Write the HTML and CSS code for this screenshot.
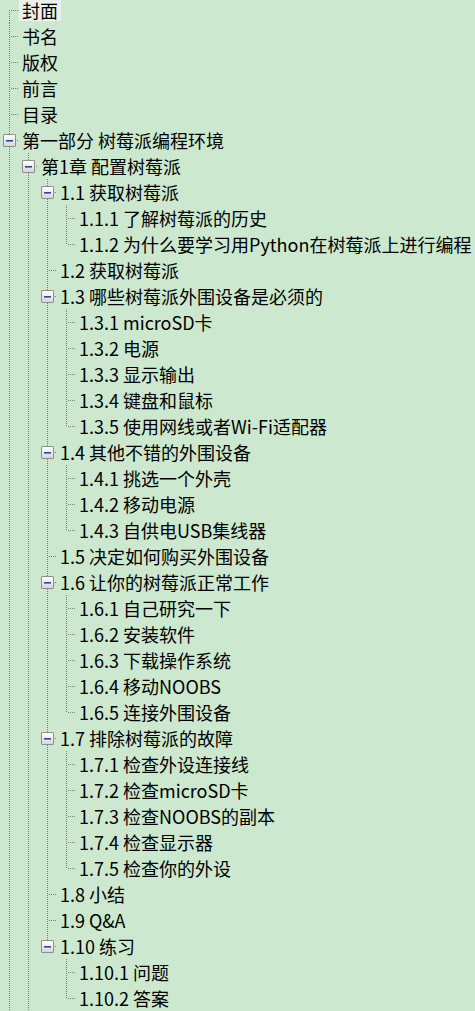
FILE: index.html
```html
<!DOCTYPE html>
<html lang="zh-CN">
<head>
<meta charset="utf-8">
<title>目录</title>
<link rel="stylesheet" href="styles.css">
</head>
<body>
<div class="tree">
  <div class="row"><span class="g f"></span><span class="label sel">封面</span></div>
  <div class="row"><span class="g t"></span><span class="label">书名</span></div>
  <div class="row"><span class="g t"></span><span class="label">版权</span></div>
  <div class="row"><span class="g t"></span><span class="label">前言</span></div>
  <div class="row"><span class="g t"></span><span class="label">目录</span></div>
  <div class="row"><span class="g t"><i class="box"></i></span><span class="label">第一部分 树莓派编程环境</span></div>
  <div class="row"><span class="g v"></span><span class="g t"><i class="box"></i></span><span class="label">第1章 配置树莓派</span></div>
  <div class="row"><span class="g v"></span><span class="g v"></span><span class="g t"><i class="box"></i></span><span class="label">1.1 获取树莓派</span></div>
  <div class="row"><span class="g v"></span><span class="g v"></span><span class="g v"></span><span class="g t"></span><span class="label">1.1.1 了解树莓派的历史</span></div>
  <div class="row"><span class="g v"></span><span class="g v"></span><span class="g v"></span><span class="g l"></span><span class="label">1.1.2 为什么要学习用Python在树莓派上进行编程</span></div>
  <div class="row"><span class="g v"></span><span class="g v"></span><span class="g t"></span><span class="label">1.2 获取树莓派</span></div>
  <div class="row"><span class="g v"></span><span class="g v"></span><span class="g t"><i class="box"></i></span><span class="label">1.3 哪些树莓派外围设备是必须的</span></div>
  <div class="row"><span class="g v"></span><span class="g v"></span><span class="g v"></span><span class="g t"></span><span class="label">1.3.1 microSD卡</span></div>
  <div class="row"><span class="g v"></span><span class="g v"></span><span class="g v"></span><span class="g t"></span><span class="label">1.3.2 电源</span></div>
  <div class="row"><span class="g v"></span><span class="g v"></span><span class="g v"></span><span class="g t"></span><span class="label">1.3.3 显示输出</span></div>
  <div class="row"><span class="g v"></span><span class="g v"></span><span class="g v"></span><span class="g t"></span><span class="label">1.3.4 键盘和鼠标</span></div>
  <div class="row"><span class="g v"></span><span class="g v"></span><span class="g v"></span><span class="g l"></span><span class="label">1.3.5 使用网线或者Wi-Fi适配器</span></div>
  <div class="row"><span class="g v"></span><span class="g v"></span><span class="g t"><i class="box"></i></span><span class="label">1.4 其他不错的外围设备</span></div>
  <div class="row"><span class="g v"></span><span class="g v"></span><span class="g v"></span><span class="g t"></span><span class="label">1.4.1 挑选一个外壳</span></div>
  <div class="row"><span class="g v"></span><span class="g v"></span><span class="g v"></span><span class="g t"></span><span class="label">1.4.2 移动电源</span></div>
  <div class="row"><span class="g v"></span><span class="g v"></span><span class="g v"></span><span class="g l"></span><span class="label">1.4.3 自供电USB集线器</span></div>
  <div class="row"><span class="g v"></span><span class="g v"></span><span class="g t"></span><span class="label">1.5 决定如何购买外围设备</span></div>
  <div class="row"><span class="g v"></span><span class="g v"></span><span class="g t"><i class="box"></i></span><span class="label">1.6 让你的树莓派正常工作</span></div>
  <div class="row"><span class="g v"></span><span class="g v"></span><span class="g v"></span><span class="g t"></span><span class="label">1.6.1 自己研究一下</span></div>
  <div class="row"><span class="g v"></span><span class="g v"></span><span class="g v"></span><span class="g t"></span><span class="label">1.6.2 安装软件</span></div>
  <div class="row"><span class="g v"></span><span class="g v"></span><span class="g v"></span><span class="g t"></span><span class="label">1.6.3 下载操作系统</span></div>
  <div class="row"><span class="g v"></span><span class="g v"></span><span class="g v"></span><span class="g t"></span><span class="label">1.6.4 移动NOOBS</span></div>
  <div class="row"><span class="g v"></span><span class="g v"></span><span class="g v"></span><span class="g l"></span><span class="label">1.6.5 连接外围设备</span></div>
  <div class="row"><span class="g v"></span><span class="g v"></span><span class="g t"><i class="box"></i></span><span class="label">1.7 排除树莓派的故障</span></div>
  <div class="row"><span class="g v"></span><span class="g v"></span><span class="g v"></span><span class="g t"></span><span class="label">1.7.1 检查外设连接线</span></div>
  <div class="row"><span class="g v"></span><span class="g v"></span><span class="g v"></span><span class="g t"></span><span class="label">1.7.2 检查microSD卡</span></div>
  <div class="row"><span class="g v"></span><span class="g v"></span><span class="g v"></span><span class="g t"></span><span class="label">1.7.3 检查NOOBS的副本</span></div>
  <div class="row"><span class="g v"></span><span class="g v"></span><span class="g v"></span><span class="g t"></span><span class="label">1.7.4 检查显示器</span></div>
  <div class="row"><span class="g v"></span><span class="g v"></span><span class="g v"></span><span class="g l"></span><span class="label">1.7.5 检查你的外设</span></div>
  <div class="row"><span class="g v"></span><span class="g v"></span><span class="g t"></span><span class="label">1.8 小结</span></div>
  <div class="row"><span class="g v"></span><span class="g v"></span><span class="g t"></span><span class="label">1.9 Q&amp;A</span></div>
  <div class="row"><span class="g v"></span><span class="g v"></span><span class="g l"><i class="box"></i></span><span class="label">1.10 练习</span></div>
  <div class="row"><span class="g v"></span><span class="g v"></span><span class="g e"></span><span class="g t"></span><span class="label">1.10.1 问题</span></div>
  <div class="row"><span class="g v"></span><span class="g v"></span><span class="g e"></span><span class="g l"></span><span class="label">1.10.2 答案</span></div>
</div>
</body>
</html>
```
FILE: styles.css
```css
html, body {
  margin: 0;
  padding: 0;
  background: #cce8cf;
  overflow: hidden;
}

.tree {
  margin-top: -3px;
  font-family: "Noto Sans CJK SC", "Noto Sans", sans-serif;
  font-size: 18px;
  color: #000;
}

.row {
  display: flex;
  align-items: flex-start;
  height: 26px;
  white-space: nowrap;
}

.g {
  position: relative;
  flex: none;
  width: 19px;
  height: 26px;
}

.v::before,
.t::before,
.l::before,
.f::before {
  content: "";
  position: absolute;
  left: 9px;
  width: 1px;
  background: repeating-linear-gradient(to bottom, #7a7a7a 0 1px, transparent 1px 2px);
}

.v::before,
.t::before { top: 0; bottom: 0; }
.l::before { top: 0; height: 13px; }
.f::before { top: 13px; bottom: 0; }

.t::after,
.l::after,
.f::after {
  content: "";
  position: absolute;
  left: 11px;
  top: 13px;
  width: 8px;
  height: 1px;
  background: repeating-linear-gradient(to right, #7a7a7a 0 1px, transparent 1px 2px);
}

.box {
  position: absolute;
  z-index: 1;
  left: 3px;
  top: 7px;
  width: 11px;
  height: 11px;
  border: 1px solid #8f8f8f;
  border-radius: 1px;
  background: linear-gradient(to bottom, #ffffff, #d6d6d6);
}

.box::after {
  content: "";
  position: absolute;
  left: 2px;
  top: 5px;
  width: 7px;
  height: 2px;
  background: linear-gradient(to bottom, #3444a0 50%, #7282c4 50%);
}

.label {
  display: inline-block;
  margin-top: 3px;
  height: 21px;
  line-height: 21px;
  padding: 0 3px;
}

.sel {
  background: #ebf0eb;
}
```
